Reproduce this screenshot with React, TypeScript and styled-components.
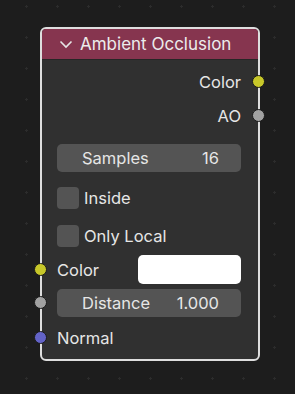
import styled, { createGlobalStyle } from 'styled-components';

const Global = createGlobalStyle`
  html, body {
    margin: 0;
    padding: 0;
    width: 295px;
    height: 394px;
    overflow: hidden;
    background-color: #1d1d1d;
    background-image: radial-gradient(circle, #2c2c2c 1px, transparent 1.4px);
    background-size: 31px 31px;
    background-position: 11px -9px;
    font-family: Inter, "DejaVu Sans", sans-serif;
  }
`;

const Canvas = styled.div`
  padding: 27px 0 0 40px;
`;

const Node = styled.div`
  width: 220px;
  height: 334px;
  box-sizing: border-box;
  border: 2px solid #dedede;
  border-radius: 6px;
  background: #303030;
  color: #e6e6e6;
  font-size: 16.5px;
  display: flex;
  flex-direction: column;
`;

const Header = styled.div`
  height: 30px;
  background: #86354f;
  border-radius: 4px 4px 0 0;
  border-bottom: 1px solid #262626;
  display: flex;
  align-items: center;
  gap: 7px;
  padding-left: 17px;
  font-size: 17px;
  color: #ececec;
`;

const Body = styled.div`
  display: flex;
  flex-direction: column;
  padding: 5px 17px 0 15px;
`;

const Row = styled.div<{ $h: number; $mt?: number; $right?: boolean }>`
  position: relative;
  height: ${(p) => p.$h}px;
  margin-top: ${(p) => p.$mt ?? 0}px;
  display: flex;
  align-items: center;
  justify-content: ${(p) => (p.$right ? 'flex-end' : 'flex-start')};
  gap: 5px;
`;

const Socket = styled.span<{ $color: string; $side: 'left' | 'right' }>`
  position: absolute;
  top: 50%;
  ${(p) => (p.$side === 'left' ? 'left: -23px;' : 'right: -24px;')}
  width: 11px;
  height: 11px;
  margin-top: -7px;
  border-radius: 50%;
  background: ${(p) => p.$color};
  border: 1.5px solid #1a1a1a;
`;

const Field = styled.div`
  flex: 1;
  height: 28px;
  border-radius: 5px;
  background: #545454;
  display: flex;
  align-items: center;
  justify-content: space-between;
  padding: 0 22px 0 25px;
`;

const Check = styled.span`
  width: 22px;
  height: 22px;
  border-radius: 4px;
  background: #545454;
`;

const Label = styled.span`
  white-space: nowrap;
`;

const Swatch = styled.div`
  width: 103px;
  height: 29px;
  margin-left: auto;
  border-radius: 5px;
  background: #ffffff;
`;

const Chevron = () => (
  <svg width="14" height="9" viewBox="0 0 14 9">
    <path d="M1.5 1.5 L7 7 L12.5 1.5" fill="none" stroke="#e6e6e6" strokeWidth="1.6" />
  </svg>
);

export default function App() {
  return (
    <>
      <Global />
      <Canvas>
        <Node>
          <Header>
            <Chevron />
            <span>Ambient Occlusion</span>
          </Header>
          <Body>
            <Row $h={34} $right>
              Color
              <Socket $color="#c7c729" $side="right" />
            </Row>
            <Row $h={34} $right>
              AO
              <Socket $color="#a1a1a1" $side="right" />
            </Row>
            <Row $h={28} $mt={11}>
              <Field>
                <span>Samples</span>
                <span>16</span>
              </Field>
            </Row>
            <Row $h={22} $mt={15}>
              <Check />
              <Label>Inside</Label>
            </Row>
            <Row $h={22} $mt={16}>
              <Check />
              <Label>Only Local</Label>
            </Row>
            <Row $h={29} $mt={8}>
              <Socket $color="#c7c729" $side="left" />
              <Label>Color</Label>
              <Swatch />
            </Row>
            <Row $h={28} $mt={5}>
              <Socket $color="#a1a1a1" $side="left" />
              <Field>
                <span>Distance</span>
                <span>1.000</span>
              </Field>
            </Row>
            <Row $h={34} $mt={4}>
              <Socket $color="#6363c7" $side="left" />
              <Label>Normal</Label>
            </Row>
          </Body>
        </Node>
      </Canvas>
    </>
  );
}
